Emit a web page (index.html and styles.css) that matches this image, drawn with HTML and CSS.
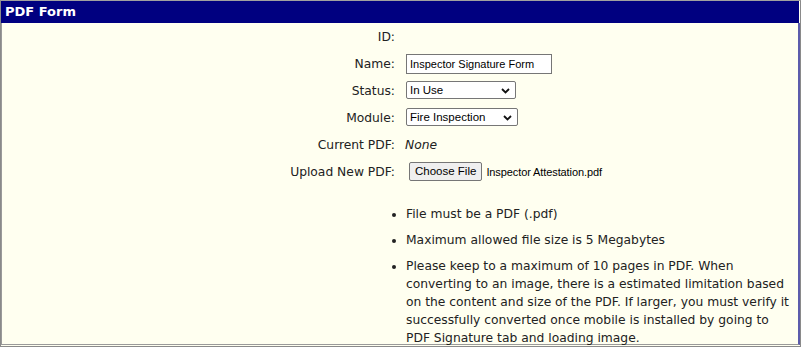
FILE: index.html
```html
<!DOCTYPE html>
<html lang="en">
<head>
    <meta charset="UTF-8">
    <title>PDF Form</title>
    <link rel="stylesheet" href="styles.css">
</head>
<body>
    <div class="panel">
        <div class="panel-title">PDF Form</div>
        <div class="panel-body">
            <div class="form-grid">
                <div class="field-label">ID:</div>
                <div class="field-value"></div>

                <div class="field-label">Name:</div>
                <div class="field-value">
                    <input type="text" class="text-input" value="Inspector Signature Form">
                </div>

                <div class="field-label">Status:</div>
                <div class="field-value">
                    <span class="select-wrap">
                        <select class="select status-select">
                            <option>In Use</option>
                            <option>Not In Use</option>
                        </select>
                        <svg class="chevron" width="9" height="6" viewBox="0 0 9 6"><path d="M1 1 L4.5 4.5 L8 1" fill="none" stroke="#111" stroke-width="1.8"/></svg>
                    </span>
                </div>

                <div class="field-label">Module:</div>
                <div class="field-value">
                    <span class="select-wrap">
                        <select class="select module-select">
                            <option>Fire Inspection</option>
                        </select>
                        <svg class="chevron" width="9" height="6" viewBox="0 0 9 6"><path d="M1 1 L4.5 4.5 L8 1" fill="none" stroke="#111" stroke-width="1.8"/></svg>
                    </span>
                </div>

                <div class="field-label">Current PDF:</div>
                <div class="field-value"><em>None</em></div>

                <div class="field-label">Upload New PDF:</div>
                <div class="field-value">
                    <span class="file-button">Choose File</span>
                    <span class="file-name">Inspector Attestation.pdf</span>
                </div>

                <div></div>
                <ul class="notes">
                    <li>File must be a PDF (.pdf)</li>
                    <li>Maximum allowed file size is 5 Megabytes</li>
                    <li>Please keep to a maximum of 10 pages in PDF. When converting to an image, there is a estimated limitation based on the content and size of the PDF. If larger, you must verify it successfully converted once mobile is installed by going to PDF Signature tab and loading image.</li>
                </ul>
            </div>
        </div>
    </div>
</body>
</html>
```

FILE: styles.css
```css
body {
    margin: 0;
    font-family: "DejaVu Sans", Verdana, sans-serif;
    font-size: 12.3px;
    color: #222;
    background-color: #fff;
}

.panel {
    width: 799px;
    height: 345px;
    border: 1px solid #8a8a8a;
    border-top-color: #a0a0a0;
    background-color: #fffff0;
    overflow: hidden;
}

.panel-title {
    background-color: #000080;
    color: #fff;
    font-size: 13px;
    font-weight: bold;
    height: 22px;
    line-height: 22px;
    padding-left: 4px;
    margin-right: 1px;
}

.panel-body {
    height: 322px;
    border-left: 1px solid #9a9a9a;
    border-right: 2px solid #5c5cac;
    border-bottom: 1px solid #9a9a9a;
    box-sizing: border-box;
}

.form-grid {
    display: grid;
    grid-template-columns: 393px 1fr;
    grid-auto-rows: 27px;
}

.field-label {
    text-align: right;
    align-self: center;
}

.field-value {
    align-self: center;
    padding-left: 10px;
    display: flex;
    align-items: center;
}

.text-input,
.select,
.file-button,
.file-name {
    font-family: "Liberation Sans", Arial, sans-serif;
    font-size: 11px;
    color: #000;
}

.text-input {
    width: 146px;
    height: 20px;
    box-sizing: border-box;
    border: 1px solid #767676;
    padding: 1px 3px;
    margin: 0 0 0 1px;
    background-color: #fff;
}

.select-wrap {
    display: inline-flex;
    align-items: center;
    margin-left: 1px;
}

.select {
    appearance: none;
    height: 18px;
    box-sizing: border-box;
    border: 1px solid #767676;
    border-radius: 2px;
    background-color: #fff;
    padding: 0 16px 0 3px;
    margin: -1px 0 0 0;
    font-size: 11.5px;
}

.chevron {
    margin-left: -15px;
    pointer-events: none;
}

.status-select {
    width: 110px;
}

.module-select {
    width: 112px;
}

em {
    font-style: italic;
}

.file-button {
    display: inline-block;
    margin-left: 4px;
    font-size: 11.5px;
    height: 19px;
    line-height: 17px;
    box-sizing: border-box;
    padding: 0 5px;
    border: 1px solid #767676;
    border-radius: 2px;
    background-color: #efefef;
}

.file-name {
    margin-left: 4px;
    letter-spacing: -0.1px;
}

.notes {
    grid-row: span 5;
    margin: 20px 0 0 0;
    padding-left: 11px;
    padding-right: 6px;
    line-height: 18px;
}

.notes li {
    margin-bottom: 8px;
}
```
